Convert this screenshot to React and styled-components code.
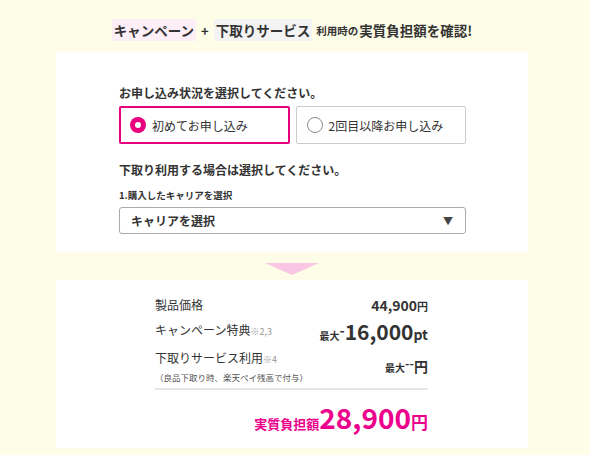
import React, { useState } from "react";
import styled, { createGlobalStyle } from "styled-components";

const GlobalStyle = createGlobalStyle`
body{
  margin: 0;
  background: #fefde8;
  font-family: "Noto Sans CJK JP", "Noto Sans", sans-serif;
  color: #333;
}
`

const Pagina = styled.div`
display: flex;
flex-direction: column;
align-items: center;
padding-top: 16px;
width: 584px;
`
const Titulo = styled.h1`
margin: 0 0 8px;
height: 28px;
display: flex;
align-items: center;
font-size: 13.5px;
font-weight: 700;
color: #333;
`
const Marca = styled.span`
background: ${props => props.rosa ? "#fdeef7" : "#f3f3f4"};
padding: 1px 2px;
`
const Mais = styled.span`
margin: 0 5px;
font-size: 13px;
`
const Pequeno = styled.span`
font-size: 10.5px;
margin: 0 1px 0 4px;
`
const Painel = styled.div`
width: 472px;
box-sizing: border-box;
background: #fff;
padding: ${props => props.padding};
display: flex;
flex-direction: column;
`
const Rotulo = styled.div`
font-size: 12px;
font-weight: 700;
line-height: 16px;
margin-top: ${props => props.mt || 0}px;
`
const RotuloMini = styled.div`
font-size: 9.5px;
font-weight: 700;
line-height: 13px;
margin-top: 11px;
`
const Opcoes = styled.div`
display: grid;
grid-template-columns: 1fr 1fr;
gap: 6px;
margin-top: 5px;
`
const Opcao = styled.label`
height: 38px;
box-sizing: border-box;
border: ${props => props.ativo ? "2px solid #e8007f" : "1px solid #ccc"};
border-radius: 2px;
display: flex;
align-items: center;
gap: 6px;
padding-left: ${props => props.ativo ? 9 : 10}px;
font-size: 12px;
cursor: pointer;
`
const Bolinha = styled.span`
width: 16px;
height: 16px;
border-radius: 50%;
box-sizing: border-box;
flex-shrink: 0;
background: ${props => props.ativo ? "#e8007f" : "#fff"};
border: ${props => props.ativo ? "none" : "1px solid #888"};
display: flex;
align-items: center;
justify-content: center;
&::after{
  content: "";
  display: ${props => props.ativo ? "block" : "none"};
  width: 6px;
  height: 6px;
  border-radius: 50%;
  background: #fff;
}
`
const Seletor = styled.div`
margin-top: 5px;
height: 27px;
box-sizing: border-box;
border: 1px solid #aaa;
border-radius: 3px;
display: flex;
align-items: center;
justify-content: space-between;
padding: 0 12px 0 11px;
font-size: 12px;
font-weight: 700;
`
const Seta = styled.span`
font-size: 10px;
color: #444;
`
const Triangulo = styled.div`
height: 28px;
display: flex;
justify-content: center;
align-items: flex-start;
padding-top: 11px;
box-sizing: border-box;
&::before{
  content: "";
  border-left: 27px solid transparent;
  border-right: 27px solid transparent;
  border-top: 12px solid #f9c6e4;
}
`
const Linha = styled.div`
display: flex;
justify-content: space-between;
align-items: center;
height: ${props => props.altura}px;
`
const Nome = styled.div`
font-size: 12px;
line-height: 16px;
`
const Nota = styled.span`
font-size: 9px;
color: #999;
`
const Sub = styled.div`
font-size: 8.5px;
line-height: 12px;
color: #555;
margin-top: 3px;
`
const Valor = styled.div`
font-weight: 700;
display: flex;
align-items: baseline;
font-size: ${props => props.tamanho}px;
color: ${props => props.cor || "#333"};
`
const Unidade = styled.span`
font-size: ${props => props.tamanho}px;
line-height: 1;
`
const Traco = styled.span`
font-size: ${props => props.tamanho || 14}px;
position: relative;
top: -4px;
`
const Divisor = styled.div`
height: 2px;
background: #e6e6e6;
margin-top: 2px;
`
const Total = styled.div`
display: flex;
justify-content: flex-end;
align-items: baseline;
color: #ec008c;
font-weight: 700;
height: 30px;
padding-top: 4px;
box-sizing: border-box;
margin-top: 9px;
`

export default function App() {
  const [escolha, setEscolha] = useState(0)

  return (
    <Pagina>
      <GlobalStyle />
      <Titulo>
        <Marca rosa>キャンペーン</Marca>
        <Mais>+</Mais>
        <Marca>下取りサービス</Marca>
        <Pequeno>利用時の</Pequeno>
        実質負担額を確認!
      </Titulo>
      <Painel padding="33px 62px 18px 63px">
        <Rotulo>お申し込み状況を選択してください。</Rotulo>
        <Opcoes>
          <Opcao ativo={escolha === 0} onClick={() => setEscolha(0)}>
            <Bolinha ativo={escolha === 0} />初めてお申し込み
          </Opcao>
          <Opcao ativo={escolha === 1} onClick={() => setEscolha(1)}>
            <Bolinha ativo={escolha === 1} />2回目以降お申し込み
          </Opcao>
        </Opcoes>
        <Rotulo mt={18}>下取り利用する場合は選択してください。</Rotulo>
        <RotuloMini>1.購入したキャリアを選択</RotuloMini>
        <Seletor>
          キャリアを選択
          <Seta>▼</Seta>
        </Seletor>
      </Painel>
      <Triangulo />
      <Painel padding="14px 100px 19px 99px">
        <Linha altura={22}>
          <Nome>製品価格</Nome>
          <Valor tamanho={14}>44,900<Unidade tamanho={11}>円</Unidade></Valor>
        </Linha>
        <Linha altura={30}>
          <Nome>キャンペーン特典<Nota>※2,3</Nota></Nome>
          <Valor tamanho={21}>
            <Unidade tamanho={10}>最大</Unidade>
            <Traco>-</Traco>16,000<Unidade tamanho={14}>pt</Unidade>
          </Valor>
        </Linha>
        <Linha altura={40}>
          <div>
            <Nome>下取りサービス利用<Nota>※4</Nota></Nome>
            <Sub>（良品下取り時、楽天ペイ残高で付与）</Sub>
          </div>
          <Valor tamanho={14}>
            <Unidade tamanho={10}>最大</Unidade>
            <Traco tamanho={12}>--</Traco>円
          </Valor>
        </Linha>
        <Divisor />
        <Total>
          <Unidade tamanho={13}>実質負担額</Unidade>
          <Unidade tamanho={28}>28,900</Unidade>
          <Unidade tamanho={17}>円</Unidade>
        </Total>
      </Painel>
    </Pagina>
  )
}
